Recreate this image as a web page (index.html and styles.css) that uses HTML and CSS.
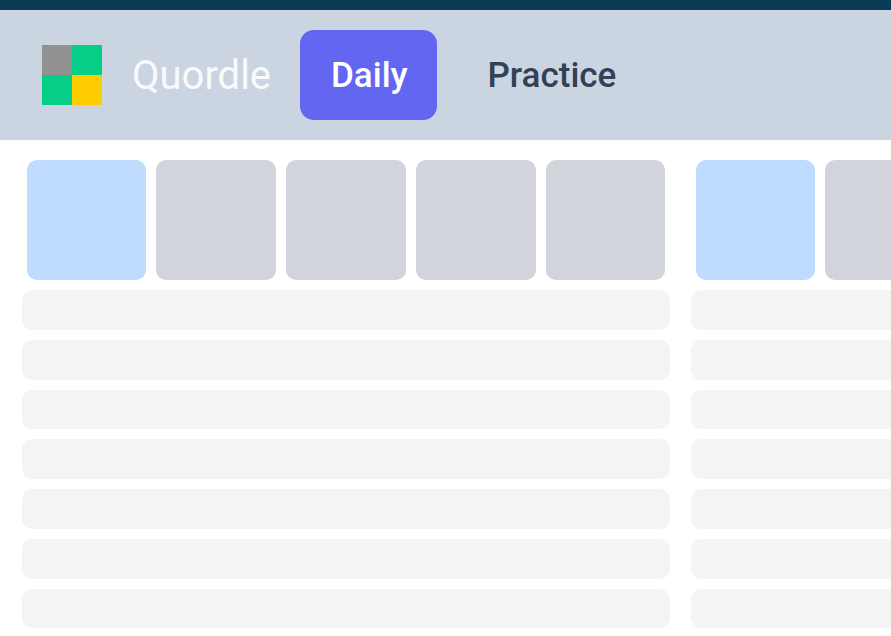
FILE: index.html
```html
<!DOCTYPE html>
<html lang="en">
<head>
<meta charset="utf-8">
<title>Quordle</title>
<link rel="stylesheet" href="styles.css">
</head>
<body>
<div class="topline"></div>
<header class="header">
  <div class="logo">
    <span class="gray"></span><span class="green"></span><span class="green"></span><span class="yellow"></span>
  </div>
  <span class="brand">Quordle</span>
  <nav class="nav">
    <span class="tab active">Daily</span>
    <span class="tab">Practice</span>
  </nav>
</header>
<main class="boards">
  <section class="board">
    <div class="tiles"><div class="tile blue"></div><div class="tile"></div><div class="tile"></div><div class="tile"></div><div class="tile"></div></div>
    <div class="rows"><div class="row"></div><div class="row"></div><div class="row"></div><div class="row"></div><div class="row"></div><div class="row"></div><div class="row"></div></div>
  </section>
  <section class="board">
    <div class="tiles"><div class="tile blue"></div><div class="tile"></div><div class="tile"></div><div class="tile"></div><div class="tile"></div></div>
    <div class="rows"><div class="row"></div><div class="row"></div><div class="row"></div><div class="row"></div><div class="row"></div><div class="row"></div><div class="row"></div></div>
  </section>
</main>
</body>
</html>
```
FILE: styles.css
```css
html, body {
  margin: 0;
  height: 100%;
  overflow: hidden;
  background: #fff;
  font-family: Roboto, "Liberation Sans", sans-serif;
}
.topline {
  height: 10px;
  background: #0c3b57;
}
.header {
  display: flex;
  align-items: center;
  height: 130px;
  padding-left: 42px;
  background: #cbd5e1;
}
.logo {
  display: grid;
  grid-template-columns: 30px 30px;
  grid-template-rows: 30px 30px;
}
.gray { background: #929292; }
.green { background: #06ce87; }
.yellow { background: #ffcc00; }
.brand {
  width: 138px;
  margin-left: 30px;
  font-size: 40px;
  font-weight: 400;
  white-space: nowrap;
  color: #f8fafc;
}
.nav {
  display: flex;
  margin-left: 30px;
}
.tab {
  display: flex;
  align-items: center;
  height: 90px;
  padding: 0 31px;
  margin-right: 19.5px;
  font-size: 35px;
  font-weight: 500;
  color: #334155;
  border-radius: 14px;
}
.tab.active {
  width: 75px;
  background: #6366f1;
  color: #fff;
}
.boards {
  display: grid;
  grid-template-columns: 648px 648px;
  column-gap: 21px;
  padding: 20px 0 0 22px;
}
.tiles {
  display: grid;
  grid-template-columns: repeat(5, 119.6px);
  column-gap: 10.2px;
  padding: 0 4.6px;
}
.tile {
  height: 120px;
  border-radius: 10px;
  background: #d1d5db;
}
.tile.blue { background: #bfdbfe; }
.rows {
  display: grid;
  grid-auto-rows: 39.75px;
  row-gap: 10px;
  margin-top: 10px;
}
.row {
  border-radius: 10px;
  background: #f3f4f4;
}
```
